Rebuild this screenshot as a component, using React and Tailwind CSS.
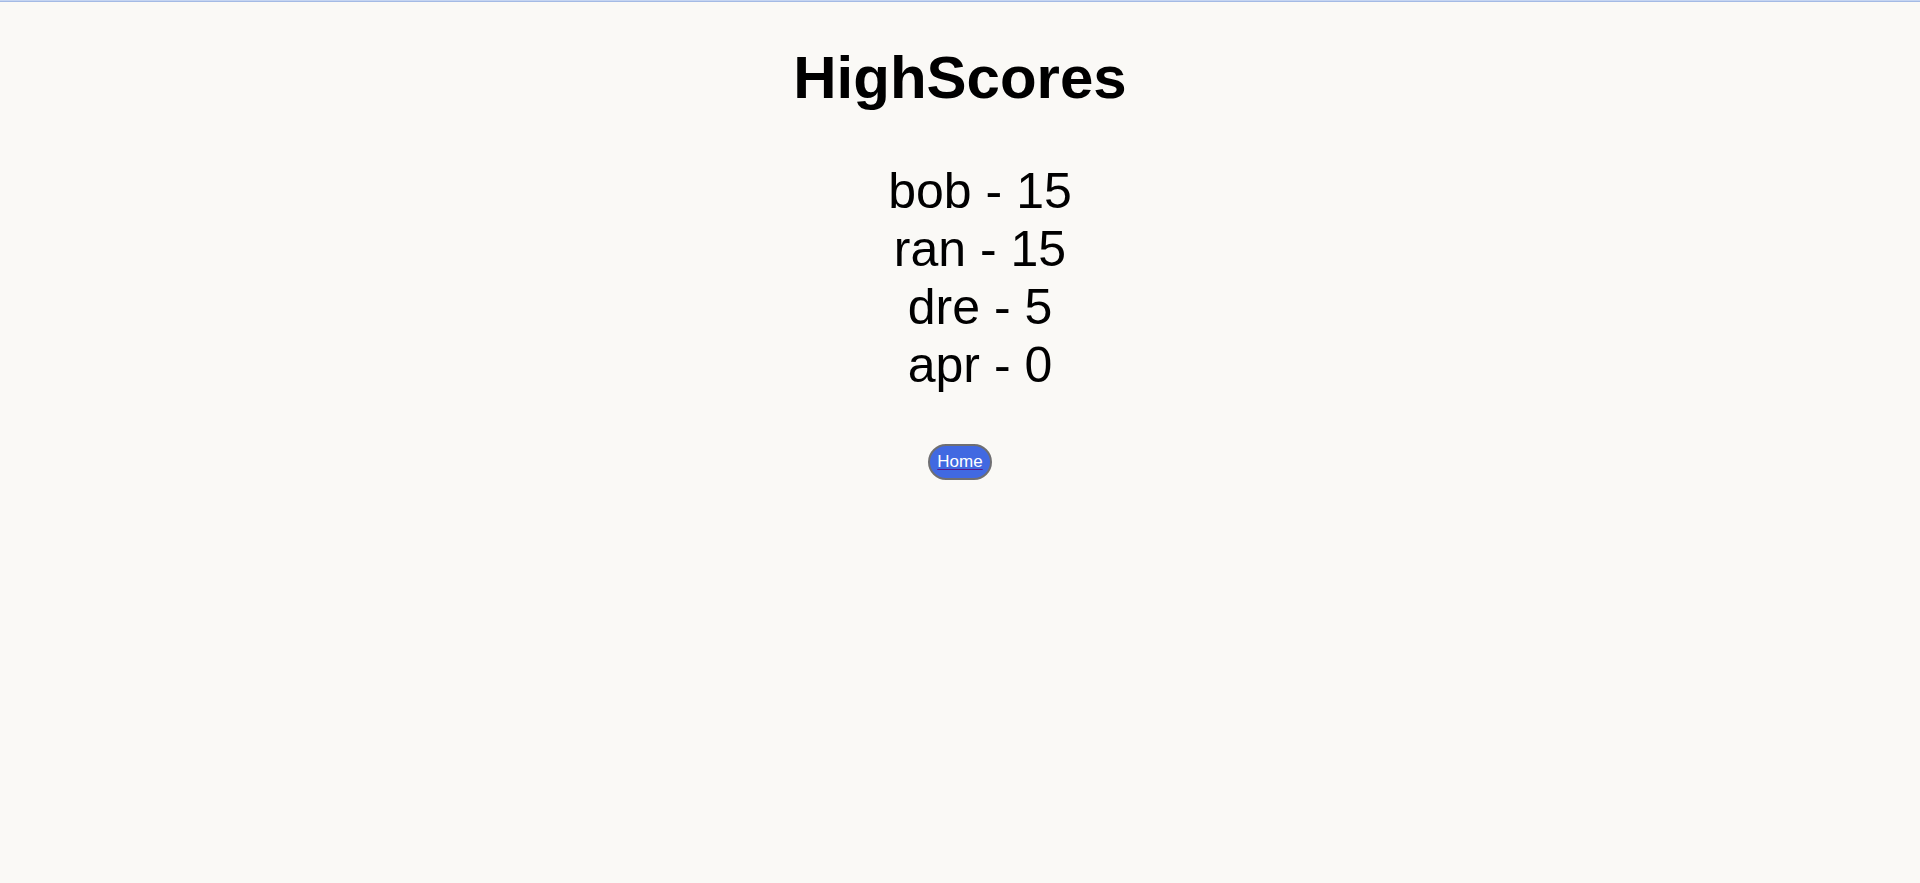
export default function App() {
  const scores = [
    ["bob", 15],
    ["ran", 15],
    ["dre", 5],
    ["apr", 0],
  ];
  return (
    <div className="min-h-screen bg-[#faf9f6] text-black font-['Liberation_Sans',Arial,sans-serif] flex flex-col">
      <div className="h-[2px] bg-[#c5d5f2] border-b border-[#a4bae4]" />
      <div className="flex flex-col items-center text-center">
        <h1 className="mt-[41px] text-[60px] leading-[69px] font-bold">HighScores</h1>
        <ul className="mt-[50px] pl-[40px] text-[50px] leading-[58px] list-none">
          {scores.map(([n, s]) => (
            <li key={n}>
              {n} - {s}
            </li>
          ))}
        </ul>
        <a href="#" className="mt-[50px] no-underline">
          <span className="inline-block rounded-full bg-[#4169e1] border-2 border-[#6f6f72] text-white text-[17px] leading-[20px] px-[7px] py-[6px]">
            <span className="underline decoration-[#551a8b] decoration-1 underline-offset-[2px]">Home</span>
          </span>
        </a>
      </div>
    </div>
  );
}
